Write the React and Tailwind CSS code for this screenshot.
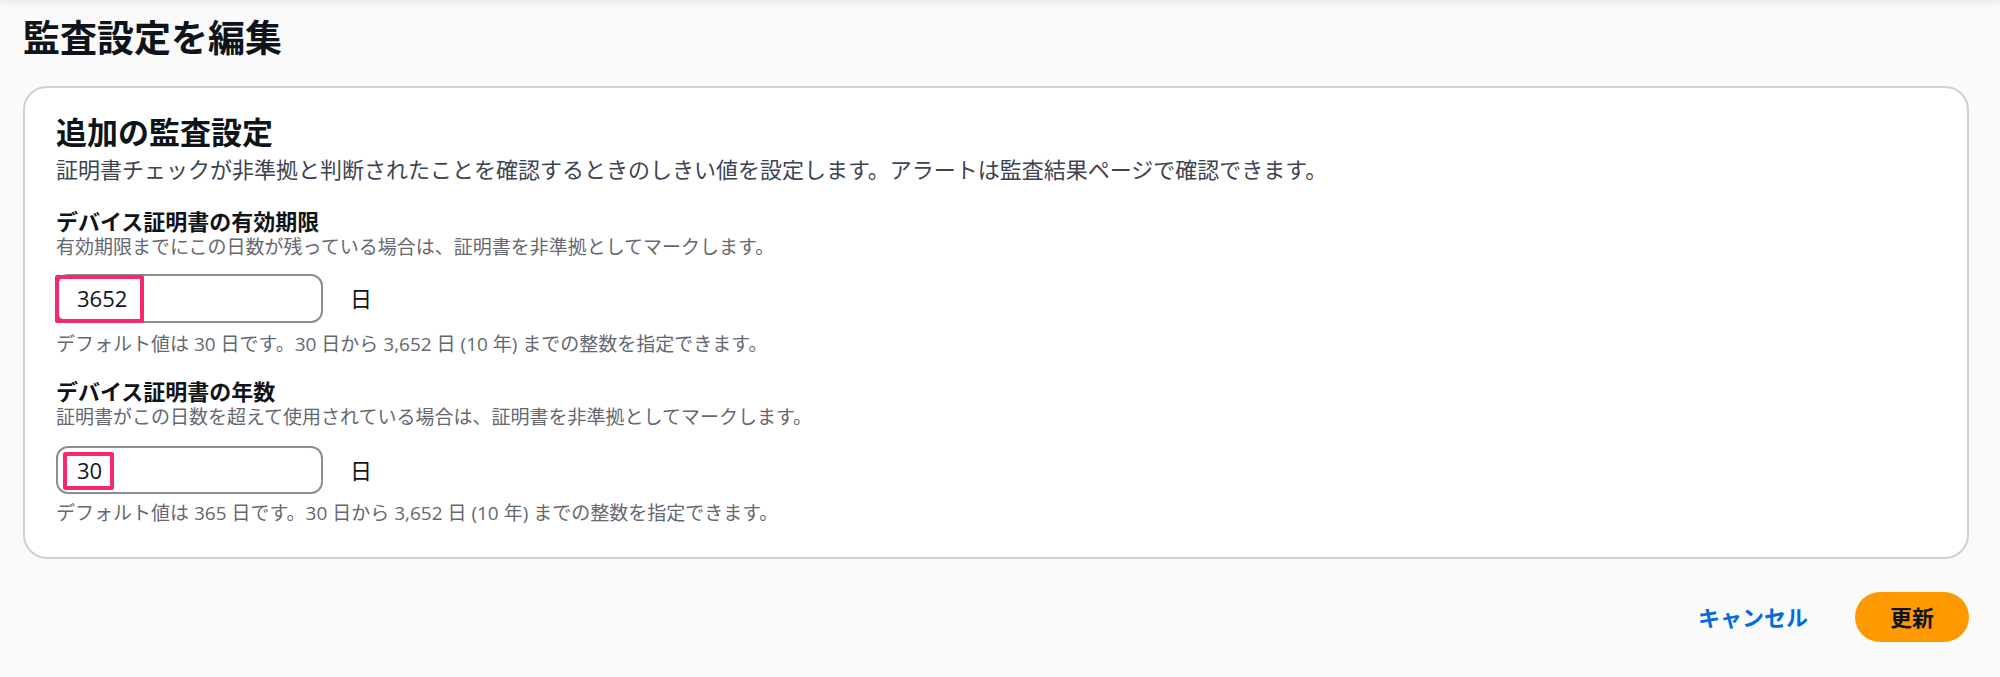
import React from "react";

const FONT = { fontFamily: '"Open Sans", "Noto Sans CJK JP", sans-serif' };

function Field({ label, hint, value, constraint, labelMt, inputMt, constraintMt, mark, inputH }) {
  return (
    <div>
      <div className={`${labelMt} text-[22px] leading-[30px] font-bold text-[#0f141a]`}>{label}</div>
      <div className="text-[19px] leading-[22px] text-[#656871]">{hint}</div>
      <div className={`${inputMt} flex items-center gap-[27px]`}>
        <div className={`relative w-[267px] ${inputH} rounded-[12px] border-2 border-[#8c8c94] bg-white flex items-center pl-[19px] text-[22px] text-[#0f141a]`}>
          {value}
          {mark}
        </div>
        <span className="text-[22px] text-[#0f141a]">日</span>
      </div>
      <div className={`${constraintMt} text-[19px] leading-[22px] text-[#656871]`}>{constraint}</div>
    </div>
  );
}

export default function App() {
  return (
    <div className="min-h-[677px] bg-[#fafafa] relative" style={FONT}>
      <div className="h-[2px] bg-[#eeeeee] shadow-[0_1px_6px_rgba(0,0,0,0.14)]" />
      <div className="pl-[23px] pr-[31px]">
        <h1 className="pt-[13px] text-[37px] leading-[45px] font-bold text-[#0f141a]">監査設定を編集</h1>
        <div className="mt-[26px] rounded-[24px] border-2 border-[#cfcfd5] bg-white pl-[31px] pr-[31px] pt-[26px] pb-[33px]">
          <h2 className="text-[31px] leading-[36px] font-bold text-[#0f141a]">追加の監査設定</h2>
          <p className="mt-[4px] text-[22px] leading-[30px] text-[#3d4451]">
            証明書チェックが非準拠と判断されたことを確認するときのしきい値を設定します。アラートは監査結果ページで確認できます。
          </p>
          <Field
            label="デバイス証明書の有効期限"
            hint="有効期限までにこの日数が残っている場合は、証明書を非準拠としてマークします。"
            value="3652"
            constraint="デフォルト値は 30 日です。30 日から 3,652 日 (10 年) までの整数を指定できます。"
            labelMt="mt-[22px]"
            inputMt="mt-[16px]"
            constraintMt="mt-[10px]"
            inputH="h-[49px]"
            mark={<div className="absolute left-[-3px] top-[-1px] w-[89px] h-[48px] border-[4px] border-[#f7286c] rounded-[2px]" />}
          />
          <Field
            label="デバイス証明書の年数"
            hint="証明書がこの日数を超えて使用されている場合は、証明書を非準拠としてマークします。"
            value="30"
            constraint="デフォルト値は 365 日です。30 日から 3,652 日 (10 年) までの整数を指定できます。"
            labelMt="mt-[21px]"
            inputMt="mt-[18px]"
            constraintMt="mt-[8px]"
            inputH="h-[48px]"
            mark={<div className="absolute left-[5px] top-[4px] w-[51px] h-[38px] border-[4px] border-[#f7286c] rounded-[2px]" />}
          />
        </div>
        <div className="mt-[33px] flex justify-end items-center gap-[47px]">
          <span className="text-[22px] font-bold text-[#006ce0]">キャンセル</span>
          <button className="h-[50px] w-[114px] rounded-full bg-[#ff9900] text-[22px] font-bold text-[#0f141a]">更新</button>
        </div>
      </div>
    </div>
  );
}
